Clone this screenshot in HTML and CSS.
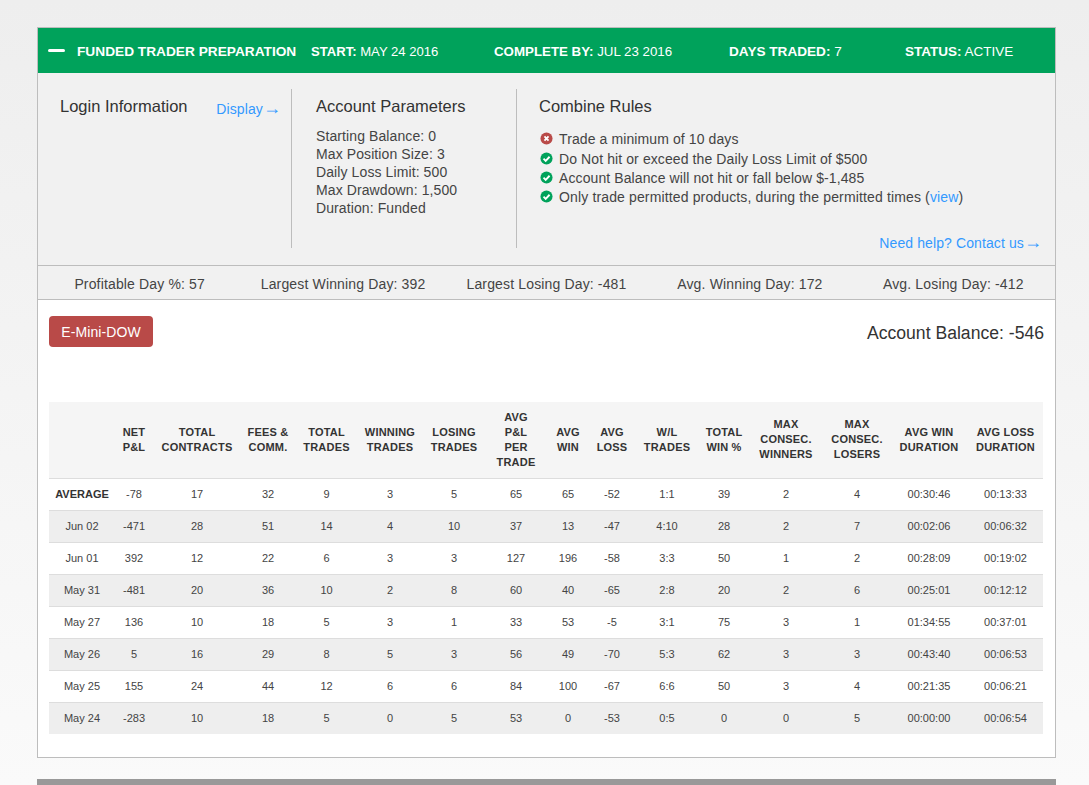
FILE: index.html
```html
<!DOCTYPE html>
<html lang="en">
    <head>
        <meta charset="UTF-8" />
        <title>Funded Trader Preparation</title>
        <link rel="stylesheet" href="styles.css">
    </head>
    <body>
        <div class="panel">
            <div class="panel-head">
                <span class="toggle"><span class="minus"></span></span>
                <span class="head-title"><b>FUNDED TRADER PREPARATION</b></span>
                <span class="head-start"><b>START:</b> MAY 24 2016</span>
                <span class="head-complete"><b>COMPLETE BY:</b> JUL 23 2016</span>
                <span class="head-days"><b>DAYS TRADED:</b> 7</span>
                <span class="head-status"><b>STATUS:</b> ACTIVE</span>
            </div>

            <div class="info">
                <div class="info-col login">
                    <h3>Login Information</h3>
                    <a href="#" class="display-link">Display<span class="arrow">&rarr;</span></a>
                </div>
                <div class="info-col params">
                    <h3>Account Parameters</h3>
                    <p>Starting Balance: 0</p>
                    <p>Max Position Size: 3</p>
                    <p>Daily Loss Limit: 500</p>
                    <p>Max Drawdown: 1,500</p>
                    <p>Duration: Funded</p>
                </div>
                <div class="info-col rules">
                    <h3>Combine Rules</h3>
                    <ul class="rule-list">
                        <li class="first">
                            <svg class="icon" viewBox="0 0 14 14"><circle cx="7" cy="7" r="6.5" fill="#b94a48"/><path d="M4.8 4.8l4.4 4.4M9.2 4.8l-4.4 4.4" stroke="#fff" stroke-width="2" fill="none"/></svg>
                            <span>Trade a minimum of 10 days</span>
                        </li>
                        <li>
                            <svg class="icon" viewBox="0 0 14 14"><circle cx="7" cy="7" r="6.5" fill="#00a25b"/><path d="M3.8 7.2l2.3 2.3 4.2-4.4" stroke="#fff" stroke-width="2" fill="none"/></svg>
                            <span>Do Not hit or exceed the Daily Loss Limit of $500</span>
                        </li>
                        <li>
                            <svg class="icon" viewBox="0 0 14 14"><circle cx="7" cy="7" r="6.5" fill="#00a25b"/><path d="M3.8 7.2l2.3 2.3 4.2-4.4" stroke="#fff" stroke-width="2" fill="none"/></svg>
                            <span>Account Balance will not hit or fall below $-1,485</span>
                        </li>
                        <li class="last">
                            <svg class="icon" viewBox="0 0 14 14"><circle cx="7" cy="7" r="6.5" fill="#00a25b"/><path d="M3.8 7.2l2.3 2.3 4.2-4.4" stroke="#fff" stroke-width="2" fill="none"/></svg>
                            <span>Only trade permitted products, during the permitted times (<a href="#">view</a>)</span>
                        </li>
                    </ul>
                    <a href="#" class="help-link">Need help? Contact us<span class="arrow">&rarr;</span></a>
                </div>
            </div>

            <div class="stats">
                <span>Profitable Day %: 57</span>
                <span>Largest Winning Day: 392</span>
                <span>Largest Losing Day: -481</span>
                <span>Avg. Winning Day: 172</span>
                <span>Avg. Losing Day: -412</span>
            </div>

            <div class="content">
                <div class="content-top">
                    <button class="product-btn">E-Mini-DOW</button>
                    <div class="balance">Account Balance: -546</div>
                </div>

                <table class="results">
                    <colgroup>
                        <col class="c66"><col class="c38"><col class="c88"><col class="c54">
                        <col class="c63"><col class="c64"><col class="c64"><col class="c60">
                        <col class="c44"><col class="c44"><col class="c66"><col class="c48">
                        <col class="c76"><col class="c66"><col class="c78"><col class="c75">
                    </colgroup>
                    <thead>
                        <tr>
                            <th></th>
                            <th>NET<br>P&amp;L</th>
                            <th>TOTAL<br>CONTRACTS</th>
                            <th>FEES &amp;<br>COMM.</th>
                            <th>TOTAL<br>TRADES</th>
                            <th>WINNING<br>TRADES</th>
                            <th>LOSING<br>TRADES</th>
                            <th>AVG<br>P&amp;L<br>PER<br>TRADE</th>
                            <th>AVG<br>WIN</th>
                            <th>AVG<br>LOSS</th>
                            <th>W/L<br>TRADES</th>
                            <th>TOTAL<br>WIN %</th>
                            <th>MAX<br>CONSEC.<br>WINNERS</th>
                            <th>MAX<br>CONSEC.<br>LOSERS</th>
                            <th>AVG WIN<br>DURATION</th>
                            <th>AVG LOSS<br>DURATION</th>
                        </tr>
                    </thead>
                    <tbody>
                        <tr class="avg"><td>AVERAGE</td><td>-78</td><td>17</td><td>32</td><td>9</td><td>3</td><td>5</td><td>65</td><td>65</td><td>-52</td><td>1:1</td><td>39</td><td>2</td><td>4</td><td>00:30:46</td><td>00:13:33</td></tr>
                        <tr><td>Jun 02</td><td>-471</td><td>28</td><td>51</td><td>14</td><td>4</td><td>10</td><td>37</td><td>13</td><td>-47</td><td>4:10</td><td>28</td><td>2</td><td>7</td><td>00:02:06</td><td>00:06:32</td></tr>
                        <tr><td>Jun 01</td><td>392</td><td>12</td><td>22</td><td>6</td><td>3</td><td>3</td><td>127</td><td>196</td><td>-58</td><td>3:3</td><td>50</td><td>1</td><td>2</td><td>00:28:09</td><td>00:19:02</td></tr>
                        <tr><td>May 31</td><td>-481</td><td>20</td><td>36</td><td>10</td><td>2</td><td>8</td><td>60</td><td>40</td><td>-65</td><td>2:8</td><td>20</td><td>2</td><td>6</td><td>00:25:01</td><td>00:12:12</td></tr>
                        <tr><td>May 27</td><td>136</td><td>10</td><td>18</td><td>5</td><td>3</td><td>1</td><td>33</td><td>53</td><td>-5</td><td>3:1</td><td>75</td><td>3</td><td>1</td><td>01:34:55</td><td>00:37:01</td></tr>
                        <tr><td>May 26</td><td>5</td><td>16</td><td>29</td><td>8</td><td>5</td><td>3</td><td>56</td><td>49</td><td>-70</td><td>5:3</td><td>62</td><td>3</td><td>3</td><td>00:43:40</td><td>00:06:53</td></tr>
                        <tr><td>May 25</td><td>155</td><td>24</td><td>44</td><td>12</td><td>6</td><td>6</td><td>84</td><td>100</td><td>-67</td><td>6:6</td><td>50</td><td>3</td><td>4</td><td>00:21:35</td><td>00:06:21</td></tr>
                        <tr><td>May 24</td><td>-283</td><td>10</td><td>18</td><td>5</td><td>0</td><td>5</td><td>53</td><td>0</td><td>-53</td><td>0:5</td><td>0</td><td>0</td><td>5</td><td>00:00:00</td><td>00:06:54</td></tr>
                    </tbody>
                </table>
            </div>
        </div>

        <div class="panel panel-next">
            <div class="panel-head"></div>
        </div>
    </body>
</html>
```

FILE: styles.css
```css
html, body {
    margin: 0;
    height: 785px;
    overflow: hidden;
}

body {
    background: linear-gradient(#eeeeee, #fafafa);
    font-family: "Liberation Sans", Arial, sans-serif;
    font-size: 14px;
    letter-spacing: 0.1px;
    color: #444;
    padding-top: 27px;
    box-sizing: border-box;
}

a {
    color: #3399ff;
    text-decoration: none;
}

.panel {
    width: 1019px;
    margin-left: 37px;
    border: 1px solid #bdbdbd;
    box-sizing: border-box;
    background-color: #fff;
}

.panel-next {
    margin-top: 21px;
    border: 0;
    height: 6px;
}

.panel-next .panel-head {
    height: 6px;
    padding: 0;
    background-color: #999;
}

/* Green bar on top */
.panel-head {
    height: 45px;
    box-sizing: border-box;
    display: flex;
    align-items: center;
    padding: 2px 0 0 10px;
    background-color: #00a25b;
    color: #fff;
    letter-spacing: 0;
}

.toggle {
    width: 29px;
}

.minus {
    display: block;
    width: 17px;
    height: 3px;
    margin-top: -3px;
    background-color: #fff;
    border-radius: 2px;
}

.head-title {
    width: 234px;
    font-size: 13.7px;
}

.head-start {
    width: 183px;
    font-size: 13.1px;
}

.head-complete {
    width: 235px;
    font-size: 13.3px;
}

.head-days {
    width: 176px;
    font-size: 13.6px;
}

.head-status {
    font-size: 13.5px;
}

/* Info columns */
.info {
    display: flex;
    height: 193px;
    padding-top: 16px;
    box-sizing: border-box;
    background-color: #f1f1f1;
    border-bottom: 1px solid #bdbdbd;
}

.info-col {
    height: 159px;
    box-sizing: border-box;
}

.info-col h3 {
    margin: 0;
    padding-top: 8px;
    font-size: 16.5px;
    line-height: 19px;
    font-weight: normal;
    letter-spacing: 0;
    color: #333;
}

.login {
    width: 254px;
    padding-left: 22px;
    display: flex;
    justify-content: space-between;
    border-right: 1px solid #bdbdbd;
}

.display-link {
    margin: 11px 10px 0 0;
    line-height: 19px;
}

/* Long thin arrow after the links */
.arrow {
    font-size: 18px;
    line-height: 0;
}

.params {
    width: 225px;
    padding-left: 24px;
    border-right: 1px solid #bdbdbd;
}

.params h3 {
    margin-bottom: 11px;
}

.params p {
    margin: 0;
    line-height: 18px;
}

.rules {
    flex: 1;
    padding: 0 13px 0 22px;
    display: flex;
    flex-direction: column;
}

.rule-list {
    list-style: none;
    margin: 12px 0 0;
    padding: 0;
}

.rule-list li {
    display: flex;
    align-items: center;
    height: 19px;
}

.rule-list li.first {
    height: 21px;
}

.rule-list li.last {
    letter-spacing: 0.14px;
}

.icon {
    width: 13px;
    height: 13px;
    margin: 0 6px 0 1px;
    flex-shrink: 0;
}

.help-link {
    margin: auto 0 -3px;
    text-align: right;
}

/* Stats strip */
.stats {
    display: grid;
    grid-template-columns: repeat(5, 1fr);
    height: 34px;
    padding-top: 3px;
    box-sizing: border-box;
    align-items: center;
    text-align: center;
    letter-spacing: 0.15px;
    background-color: #f1f1f1;
    border-bottom: 1px solid #bdbdbd;
}

.content {
    padding: 16px 12px 23px 11px;
}

.content-top {
    display: flex;
    justify-content: space-between;
    height: 86px;
}

.product-btn {
    width: 104px;
    height: 31px;
    border: 0;
    border-radius: 4px;
    background-color: #b94a48;
    color: #fff;
    font-family: inherit;
    font-size: 14px;
    letter-spacing: 0.1px;
}

.balance {
    font-size: 17.6px;
    line-height: 34px;
    letter-spacing: 0;
    margin-right: -1px;
    color: #333;
}

/* Results table */
.results {
    width: 994px;
    table-layout: fixed;
    border-collapse: collapse;
    font-size: 11px;
    letter-spacing: 0;
    color: #444;
}

.c38 { width: 38px; }
.c44 { width: 44px; }
.c48 { width: 48px; }
.c54 { width: 54px; }
.c60 { width: 60px; }
.c63 { width: 63px; }
.c64 { width: 64px; }
.c66 { width: 66px; }
.c75 { width: 75px; }
.c76 { width: 76px; }
.c78 { width: 78px; }
.c88 { width: 88px; }

.results th {
    height: 75px;
    padding: 0 0 1px;
    background-color: #f5f5f5;
    color: #333;
    font-size: 11px;
    line-height: 15px;
    font-weight: bold;
    letter-spacing: 0.2px;
    text-align: center;
    vertical-align: middle;
}

.results td {
    height: 29px;
    padding: 0 0 2px;
    text-align: center;
    border-top: 1px solid #ddd;
}

.results tbody tr:nth-child(even) td {
    background-color: #eeeeee;
}

.results tr.avg td:first-child {
    font-weight: bold;
    color: #333;
}
```
